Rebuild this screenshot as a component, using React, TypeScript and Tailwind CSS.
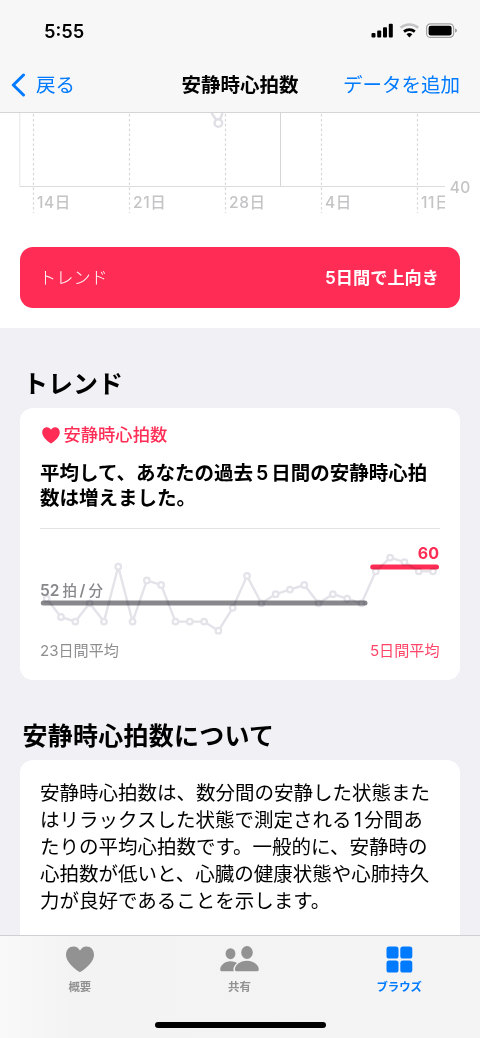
import type { ReactNode } from 'react';
import clsx from 'clsx';

const HEART = 'M14 26.2C13.4 26.2 0 17.8 0 8.8C0 3.9 3.2 0.4 7.5 0.4C10.4 0.4 12.7 2 14 4.5C15.3 2 17.6 0.4 20.5 0.4C24.8 0.4 28 3.9 28 8.8C28 17.8 14.6 26.2 14 26.2Z';

const dailyRates = [
  53, 49, 48, 52, 48, 60, 48, 57, 56, 48, 48, 48, 46, 51,
  58, 52, 54, 55, 56, 52, 54, 53, 52, 59, 62, 61, 59, 59,
];

const points = dailyRates.map((rate, i) => ({
  x: 6.7 + i * 14.31,
  y: 63.3 - (rate - 52) * 4.57,
}));

const axisLabels = [
  { x: 33.5, label: '14日' },
  { x: 129.5, label: '21日' },
  { x: 225.5, label: '28日' },
  { x: 321.5, label: '4日' },
  { x: 417.5, label: '11日' },
];

function StatusBar() {
  return (
    <div className="flex h-[62px] items-center justify-between pl-[44px] pr-[22px]">
      <span className="text-[18.3px] font-semibold leading-6">5:55</span>
      <svg width="88" height="18" viewBox="0 0 88 18">
        <rect x="1.5" y="11" width="4" height="4.5" rx="1" />
        <rect x="7.2" y="8.5" width="4" height="7" rx="1" />
        <rect x="13" y="5.3" width="4" height="10.2" rx="1" />
        <rect x="18.8" y="1.8" width="4" height="13.7" rx="1" />
        <path d="M30.6 5.8A13.4 13.4 0 0 1 48.2 5.8" fill="none" stroke="#c4c4c6" strokeWidth="2.6" />
        <path d="M34 9.6A8.3 8.3 0 0 1 44.8 9.6" fill="none" stroke="#000" strokeWidth="2.7" />
        <path d="M36.5 12.3A4.4 4.4 0 0 1 42.3 12.3L39.4 15.4Z" />
        <rect x="56.6" y="1.8" width="27" height="13.6" rx="4" fill="none" stroke="#a3a3a5" strokeWidth="1.2" />
        <rect x="58.6" y="3.8" width="23" height="9.6" rx="2.2" />
        <path d="M85 6.6C86.4 7 87 7.7 87 8.6C87 9.5 86.4 10.2 85 10.6Z" fill="#a3a3a5" />
      </svg>
    </div>
  );
}

function NavBar() {
  return (
    <div className="flex h-[46px] items-center pl-[11px] pr-5 text-[19.5px] leading-6">
      <button className="flex flex-1 items-center gap-[10px] text-[#007aff]">
        <svg width="15" height="24" viewBox="0 0 15 24" fill="none" stroke="currentColor" strokeWidth="3" strokeLinecap="round" strokeLinejoin="round">
          <path d="M12.5 2L2.3 12L12.5 22" />
        </svg>
        <span>戻る</span>
      </button>
      <h1 className="mr-[-9px] font-semibold">安静時心拍数</h1>
      <button className="flex-1 text-right text-[#007aff]">データを追加</button>
    </div>
  );
}

function HistoryChart() {
  return (
    <svg className="block" width="480" height="104" viewBox="0 0 480 104">
      <path d="M19.8 0V73.5" stroke="#e6e6e9" />
      <path d="M19.5 73.5H445" stroke="#dcdcdf" />
      <path d="M280.5 0V73.5" stroke="#d6d6d9" />
      <path d="M211.5 0L216 6.5M222.5 0L220 6.5" stroke="#e0dfe5" strokeWidth="2.4" />
      <circle cx="218.4" cy="10" r="3.8" fill="#fff" stroke="#e0dfe5" strokeWidth="2.4" />
      <clipPath id="plot">
        <rect width="445" height="104" />
      </clipPath>
      <g clipPath="url(#plot)" fill="#c4c4c6" fontSize="15.5" fontWeight="500" letterSpacing="0.6">
        {axisLabels.map(({ x, label }) => (
          <g key={label}>
            <path d={`M${x} 1V100`} stroke="#d8d8db" strokeWidth="1.2" strokeDasharray="2.5 2.4" />
            <text x={x + 3.5} y="95">{label}</text>
          </g>
        ))}
      </g>
      <text x="449.8" y="79.5" fill="#c4c4c6" fontSize="15.5" fontWeight="500" letterSpacing="0.3">40</text>
    </svg>
  );
}

function TrendChart() {
  return (
    <svg className="block" width="400" height="132" viewBox="0 0 400 132">
      <polyline
        points={points.map((p) => `${p.x},${p.y}`).join(' ')}
        fill="none"
        stroke="#e4e3e9"
        strokeWidth="2.4"
      />
      {points.map((p) => (
        <circle key={p.x} cx={p.x} cy={p.y} r="2.8" fill="#fff" stroke="#e4e3e9" strokeWidth="2.2" />
      ))}
      <g strokeWidth="5" strokeLinecap="round" className="mix-blend-multiply">
        <path d="M3.3 63H325" stroke="#88878c" />
        <path d="M332.7 27H396.5" stroke="#ff2d55" />
      </g>
      <g fill="#88888c" fontSize="14.5" fontWeight="500">
        <text x="0" y="55.8" fontSize="15.5" fontWeight="600">52</text>
        <text x="22.5" y="55.8">拍</text>
        <text x="39.5" y="55.8" fontSize="15.5" fontWeight="600">/</text>
        <text x="48.5" y="55.8">分</text>
      </g>
      <text x="399" y="19" fill="#ff2d55" fontSize="16" fontWeight="700" textAnchor="end">60</text>
      <text x="0" y="116" fill="#8e8e90" fontSize="15.1">23日間平均</text>
      <text x="399.5" y="116" fill="#ff4468" fontSize="15.1" textAnchor="end">5日間平均</text>
    </svg>
  );
}

function Tab({ label, active, children }: { label: string; active?: boolean; children: ReactNode }) {
  return (
    <div className={clsx('flex flex-1 flex-col items-center', active ? 'text-[#007aff]' : 'text-[#929292]')}>
      <div className="flex h-[27px] items-center">{children}</div>
      <span className="mt-[6.5px] text-[11.4px] font-semibold leading-4">{label}</span>
    </div>
  );
}

function TabBar() {
  return (
    <nav className="flex h-[103px] shrink-0 flex-col items-center border-t border-[#d0d0d4] bg-linear-to-r from-[#f9f9f9] from-0% via-[#f3f3f3] via-15% to-[#f4f4f4]">
      <div className="flex w-full pr-px pt-[9.5px]">
        <Tab label="概要">
          <svg width="28" height="27" viewBox="0 0 28 27" fill="currentColor">
            <path d={HEART} />
          </svg>
        </Tab>
        <Tab label="共有">
          <svg width="39" height="26" viewBox="0 0 39 26" fill="currentColor">
            <ellipse cx="10.5" cy="7.7" rx="4.9" ry="5.5" />
            <path d="M2.5 25.3C1 25.3 0.2 24.7 0.2 23.4C0.2 19.5 4.5 15.2 10.5 15.2C13 15.2 15.2 15.9 17 17C14.6 19 13.4 21.3 13.4 23.4C13.4 24.1 13.6 24.8 14 25.3Z" />
            <ellipse cx="27" cy="6.5" rx="5.8" ry="6.4" />
            <path d="M17.5 25.3C15.8 25.3 14.9 24.7 14.9 23.4C14.9 19.5 19.6 14.8 27 14.8C34.2 14.8 38.8 19.5 38.8 23.4C38.8 24.7 38 25.3 36.3 25.3Z" />
          </svg>
        </Tab>
        <Tab label="ブラウズ" active>
          <svg width="27" height="27" viewBox="0 0 27 27" fill="currentColor">
            <rect x="0.5" y="0.5" width="12" height="12" rx="2.6" />
            <rect x="14.3" y="0.5" width="12" height="12" rx="2.6" />
            <rect x="0.5" y="14.5" width="12" height="12" rx="2.6" />
            <rect x="14.3" y="14.5" width="12" height="12" rx="2.6" />
          </svg>
        </Tab>
      </div>
      <div className="mb-[10px] mt-auto h-[6px] w-[171px] rounded-full bg-black" />
    </nav>
  );
}

export default function App() {
  return (
    <div className="flex h-[1038px] w-[480px] flex-col overflow-hidden bg-[#f0f0f5] font-[Inter,'Noto_Sans_CJK_JP',sans-serif] text-black" lang="ja">
      <header className="h-[113px] shrink-0 border-b border-[#d5d5d7] bg-[#f7f7f7]">
        <StatusBar />
        <NavBar />
      </header>

      <main className="min-h-0 flex-1 overflow-hidden">
        <section className="h-[215px] bg-white">
          <HistoryChart />
          <div className="mx-5 mt-[29.5px] flex h-[61px] items-center justify-between rounded-[13px] bg-[#ff2d55] pl-[19px] pr-[21px] pt-px text-[17.2px] text-white">
            <span className="font-light">トレンド</span>
            <span className="font-semibold">5日間で上向き</span>
          </div>
        </section>

        <section className="px-5">
          <h2 className="pl-[3px] pt-[37.5px] text-[25px] font-semibold leading-9">トレンド</h2>
          <div className="mt-[6px] h-[272.5px] rounded-[13px] bg-white px-5 pt-[15.5px]">
            <div className="flex h-6 items-center gap-[3.5px] pl-[2px] text-[17.3px] font-medium text-[#ff2d55]">
              <svg width="18" height="17" viewBox="0 0 28 27" fill="currentColor">
                <path d={HEART} />
              </svg>
              安静時心拍数
            </div>
            <p className="mt-[14px] whitespace-nowrap text-[19.5px] font-semibold leading-[25px]">
              平均して、あなたの過去<span className="mx-[3px]">5</span>日間の安静時心拍
              <br />
              数は増えました。
            </p>
            <div className="mt-[16.5px] border-t border-[#e3e3e5] pt-[11px]">
              <TrendChart />
            </div>
          </div>

          <h2 className="pl-[2.5px] pt-[38px] text-[25px] font-semibold leading-9 tracking-[0.25px]">安静時心拍数について</h2>
          <div className="mt-[6px] h-[300px] whitespace-nowrap rounded-[13px] bg-white px-5 pt-[20px] text-[19.5px] leading-[27px]">
            <p>安静時心拍数は、数分間の安静した状態また</p>
            <p>はリラックスした状態で測定される<span className="mx-[2.5px]">1</span>分間あ</p>
            <p>たりの平均心拍数です。一般的に、安静時の</p>
            <p>心拍数が低いと、心臓の健康状態や心肺持久</p>
            <p>力が良好であることを示します。</p>
          </div>
        </section>
      </main>

      <TabBar />
    </div>
  );
}
